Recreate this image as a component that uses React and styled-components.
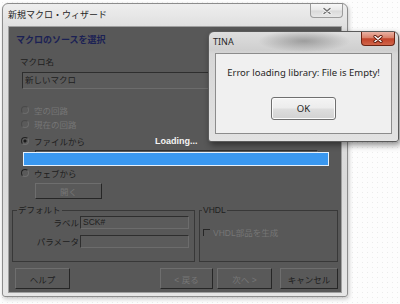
import React from 'react';
import styled, { createGlobalStyle } from 'styled-components';

// ページ全体の基本スタイル
const GlobalStyle = createGlobalStyle`
  html, body {
    margin: 0;
    padding: 0;
  }
  body {
    background: #fff;
    font-family: "Liberation Sans", "Noto Sans CJK JP", sans-serif;
  }
`;

const Desktop = styled.div`
  position: relative;
  width: 400px;
  height: 304px;
  overflow: hidden;
  box-sizing: border-box;
  padding: 3px 0 0 2px;
  background-color: #fdfdfd;
  background-image: radial-gradient(#ececec 0.7px, transparent 0.9px);
  background-size: 5px 5px;
`;

/* ---------- ウィザード本体 ---------- */

const Wizard = styled.div`
  width: 346px;
  height: 294px;
  box-sizing: border-box;
  display: flex;
  flex-direction: column;
  padding: 0 6px 4px;
  border: 1px solid #8c8c8c;
  border-radius: 6px 6px 3px 3px;
  background: linear-gradient(#eeeeee, #e0e0e0 22px, #dadada 60%, #e6e6e6);
  box-shadow: 1px 2px 4px rgba(0, 0, 0, 0.22);
`;

const TitleBar = styled.div`
  display: flex;
  align-items: flex-start;
  flex-shrink: 0;
  height: ${p => p.$h}px;
  margin: 0 -6px;
  padding-left: ${p => p.$pl}px;
`;

const Title = styled.div`
  flex: 1;
  padding-top: ${p => p.$pt}px;
  font-family: ${p => (p.$latin ? '"Noto Sans", sans-serif' : '"Liberation Sans", "Noto Sans CJK JP", sans-serif')};
  font-size: 9px;
  line-height: 12px;
  color: #262626;
`;

const CaptionButton = styled.div`
  width: ${p => p.$w}px;
  height: 14px;
  margin-right: ${p => p.$mr}px;
  box-sizing: border-box;
  display: flex;
  align-items: center;
  justify-content: center;
  border: 1px solid ${p => (p.$danger ? '#6b2414' : '#9c9c9c')};
  border-top: none;
  border-radius: 0 0 4px 4px;
  background: ${p =>
    p.$danger
      ? 'linear-gradient(#eab2a4, #d98069 45%, #c2432a 52%, #d0654a)'
      : 'linear-gradient(#f8f8f8, #e8e8e8 48%, #d9d9d9 52%, #e8e8e8)'};
`;

const Client = styled.div`
  flex: 1;
  display: flex;
  flex-direction: column;
  background: #585858;
  box-shadow: 0 0 0 1px #a0a0a0;
  font-size: 8.5px;
  color: #1e1e1e;
`;

const Heading = styled.div`
  margin: 7px 0 0 7px;
  font-size: 9px;
  font-weight: bold;
  line-height: 12px;
  color: #1b2154;
`;

const FieldLabel = styled.div`
  margin: 10px 0 0 11px;
  line-height: 12px;
`;

const TextBox = styled.div`
  width: ${p => p.$w}px;
  height: ${p => p.$h}px;
  margin: ${p => p.$m || 0};
  box-sizing: border-box;
  padding-left: 2px;
  border: 1px solid;
  border-color: #2e2e2e #6c6c6c #6c6c6c #2e2e2e;
  background: #5b5b5b;
  line-height: ${p => p.$h - 2}px;
  white-space: nowrap;
  overflow: hidden;
  flex-shrink: 0;
`;

const RadioList = styled.div`
  margin-top: 14px;
  display: flex;
  flex-direction: column;
`;

const RadioRow = styled.div`
  display: flex;
  align-items: center;
  gap: 5px;
  height: 14px;
  margin-top: ${p => p.$mt || 0}px;
  padding-left: 12px;
  color: ${p => (p.$disabled ? '#767676' : '#1e1e1e')};
`;

const RadioDot = styled.span`
  width: 8px;
  height: 8px;
  box-sizing: border-box;
  border-radius: 50%;
  border: 1px solid;
  border-color: ${p =>
    p.$disabled ? '#4a4a4a #6c6c6c #6c6c6c #4a4a4a' : '#222 #6e6e6e #6e6e6e #222'};
  background: ${p =>
    p.$checked ? 'radial-gradient(circle, #1a1a1a 1.3px, #5a5a5a 1.8px)' : '#5a5a5a'};
`;

const FileSection = styled.div`
  position: relative;
  display: flex;
  flex-direction: column;
`;

const PathField = styled(TextBox)`
  color: #3a3a3a;
  font-size: 8px;
  line-height: 10px;
  padding-left: 3px;
`;

// 読み込み中の表示（フォームの上に重なる）
const LoadingText = styled.div`
  position: absolute;
  left: 146px;
  top: 3px;
  line-height: 14px;
  font-family: "Liberation Sans", sans-serif;
  font-size: 9px;
  font-weight: bold;
  color: #f4f4f4;
`;

const ProgressBar = styled.div`
  position: absolute;
  left: 14px;
  top: 21px;
  width: 306px;
  height: 14px;
  box-sizing: border-box;
  border: 1px solid #e6f1fc;
  background: #3a98f0;
`;

const PushButton = styled.div`
  width: ${p => p.$w}px;
  height: ${p => p.$h}px;
  margin: ${p => p.$m || 0};
  box-sizing: border-box;
  display: flex;
  align-items: center;
  justify-content: center;
  flex-shrink: 0;
  border: 1px solid;
  border-color: #6e6e6e #262626 #262626 #6e6e6e;
  background: #595959;
  color: ${p => (p.$disabled ? '#767676' : '#1e1e1e')};
`;

const Groups = styled.div`
  display: flex;
  gap: 4px;
  height: 58px;
  margin: 5px 3px 0;
`;

const Group = styled.fieldset`
  width: ${p => p.$w}px;
  min-width: 0;
  height: 58px;
  margin: 0;
  padding: 0 ${p => p.$pad}px;
  box-sizing: border-box;
  border: 1px solid #383838;
`;

const Legend = styled.legend`
  padding: 0 1px;
  font-size: 8.5px;
  line-height: 12px;
  color: #1e1e1e;
`;

const FormRow = styled.div`
  display: flex;
  align-items: center;
  margin-top: ${p => p.$mt || 0}px;
`;

const FormLabel = styled.div`
  width: 63px;
  padding-right: 1px;
  box-sizing: border-box;
  text-align: right;
  line-height: 12px;
`;

const CheckRow = styled.div`
  display: flex;
  align-items: center;
  gap: 3px;
  height: 12px;
  margin: 10px 0 0 1px;
  color: #767676;
`;

const CheckBox = styled.span`
  width: 7px;
  height: 7px;
  box-sizing: border-box;
  border-top: 1px solid #262626;
  border-left: 1px solid #262626;
`;

const ButtonRow = styled.div`
  display: flex;
  margin-top: 6px;
  padding: 0 3px 0 6px;
`;

/* ---------- TINA メッセージボックス ---------- */

const MessageBox = styled.div`
  position: absolute;
  left: 208px;
  top: 31px;
  width: 191px;
  height: 111px;
  box-sizing: border-box;
  display: flex;
  flex-direction: column;
  padding: 0 6px 7px;
  border: 1px solid #5a5a5a;
  border-radius: 6px 6px 3px 3px;
  background:
    radial-gradient(ellipse 46px 11px at 95px 9px, rgba(110, 110, 110, 0.55), transparent),
    linear-gradient(#dedede, #cfcfcf 18px, #d6d6d6 22px, #e2e2e2);
  box-shadow: 2px 3px 6px rgba(0, 0, 0, 0.45);
`;

const MessagePanel = styled.div`
  flex: 1;
  display: flex;
  flex-direction: column;
  align-items: center;
  border: 1px solid #8c8c8c;
  background: #f0f0f0;
  font-family: "Noto Sans", sans-serif;
  font-size: 9.5px;
  color: #262626;
`;

const MessageText = styled.div`
  margin-top: 13px;
  line-height: 12px;
  white-space: nowrap;
`;

const OkButton = styled.div`
  width: 65px;
  height: 23px;
  margin-top: 18px;
  box-sizing: border-box;
  display: flex;
  align-items: center;
  justify-content: center;
  border: 1px solid #6f6f6f;
  border-radius: 3px;
  background: linear-gradient(#f4f4f4, #ececec 48%, #dedede 52%, #d2d2d2);
  box-shadow: inset 0 0 0 1px #fbfbfb;
`;

function CloseGlyph({ light }) {
  const d = 'M2 1.5 L8 6.5 M8 1.5 L2 6.5';
  return (
    <svg width="10" height="8" viewBox="0 0 10 8">
      <path d={d} stroke={light ? '#5a1608' : '#f4f4f4'} strokeWidth="3.2" strokeLinecap="round" />
      <path d={d} stroke={light ? '#ffffff' : '#707070'} strokeWidth="1.5" strokeLinecap="round" />
    </svg>
  );
}

function App() {
  return (
    <>
      <GlobalStyle />
      <Desktop>
        <Wizard>
          <TitleBar $h={23} $pl={5}>
            <Title $pt={5}>新規マクロ・ウィザード</Title>
            <CaptionButton $w={33} $mr={4}>
              <CloseGlyph />
            </CaptionButton>
          </TitleBar>
          <Client>
            <Heading>マクロのソースを選択</Heading>
            <FieldLabel>マクロ名</FieldLabel>
            <TextBox $w={313} $h={17} $m="4px 0 0 13px">新しいマクロ</TextBox>

            <RadioList>
              <RadioRow $disabled><RadioDot $disabled />空の回路</RadioRow>
              <RadioRow $disabled><RadioDot $disabled />現在の回路</RadioRow>
              <FileSection>
                <RadioRow $mt={3}><RadioDot $checked />ファイルから</RadioRow>
                <PathField $w={283} $h={16} $m="2px 0 0 26px">
                  C:\Users\Public\Documents\DesignSoft\TINA 9\Examples\SCHEMATIC
                </PathField>
                <LoadingText>Loading...</LoadingText>
                <ProgressBar />
              </FileSection>
              <RadioRow><RadioDot />ウェブから</RadioRow>
            </RadioList>
            <PushButton $w={67} $h={16} $m="3px 0 0 26px" $disabled>開く</PushButton>

            <Groups>
              <Group $w={183} $pad={4}>
                <Legend>デフォルト</Legend>
                <FormRow>
                  <FormLabel>ラベル</FormLabel>
                  <TextBox $w={109} $h={13}>SCK#</TextBox>
                </FormRow>
                <FormRow $mt={6}>
                  <FormLabel>パラメータ</FormLabel>
                  <TextBox $w={109} $h={13} />
                </FormRow>
              </Group>
              <Group $w={139} $pad={2}>
                <Legend>VHDL</Legend>
                <CheckRow>
                  <CheckBox />
                  VHDL部品を生成
                </CheckRow>
              </Group>
            </Groups>

            <ButtonRow>
              <PushButton $w={55} $h={21}>ヘルプ</PushButton>
              <PushButton $w={53} $h={21} $m="0 0 0 auto" $disabled>&lt; 戻る</PushButton>
              <PushButton $w={55} $h={21} $m="0 0 0 4px" $disabled>次へ &gt;</PushButton>
              <PushButton $w={58} $h={21} $m="0 0 0 8px">キャンセル</PushButton>
            </ButtonRow>
          </Client>
        </Wizard>

        <MessageBox>
          <TitleBar $h={21} $pl={4}>
            <Title $pt={4} $latin>TINA</Title>
            <CaptionButton $w={34} $mr={3} $danger>
              <CloseGlyph light />
            </CaptionButton>
          </TitleBar>
          <MessagePanel>
            <MessageText>Error loading library: File is Empty!</MessageText>
            <OkButton>OK</OkButton>
          </MessagePanel>
        </MessageBox>
      </Desktop>
    </>
  );
}

export default App;
